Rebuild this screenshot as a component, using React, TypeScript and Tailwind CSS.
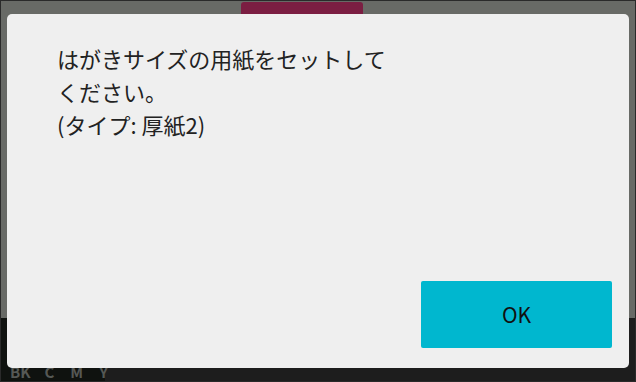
const App = () => {
  return (
    <div className="relative w-[636px] h-[382px] overflow-hidden bg-[#686a66] border border-[#2a2a2a] font-['Noto_Sans_CJK_JP','Noto_Sans',sans-serif]">
      {/* background screen */}
      <div className="flex flex-col h-full">
        <div className="flex pt-[1px] pl-[240px]">
          <div className="w-[122px] h-[14px] rounded-t-[3px] bg-[#7b1e42]" />
        </div>
        <div className="flex-1" />
        <div className="flex h-[63px] bg-[#1d1d1d]">
          <div className="flex items-end w-[104px] h-full bg-[#0f120f] pl-[9px] pb-[2px] text-[15px] font-bold text-[#555855] leading-none">
            <span>BK</span>
            <span className="ml-[14px]">C</span>
            <span className="ml-[16px]">M</span>
            <span className="ml-[16px]">Y</span>
          </div>
        </div>
      </div>

      {/* dialog */}
      <div className="absolute left-[6px] top-[13px] w-[622px] h-[354px] rounded-[5px] bg-[#efefef] flex flex-col">
        <div className="pt-[28px] pl-[50px] text-[22px] leading-[33px] text-[#222]">
          <p>はがきサイズの用紙をセットして</p>
          <p>ください。</p>
          <p>(タイプ: 厚紙2)</p>
        </div>
        <div className="flex-1" />
        <div className="flex justify-end pr-[17px] pb-[20px]">
          <button className="w-[191px] h-[67px] rounded-[2px] bg-[#00b7cf] text-[21px] text-[#111]">
            OK
          </button>
        </div>
      </div>
    </div>
  );
};

export default App;
